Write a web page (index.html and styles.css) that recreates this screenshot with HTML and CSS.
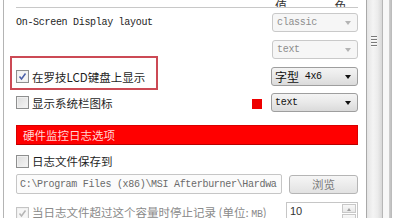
FILE: index.html
```html
<!DOCTYPE html>
<html>
<head>
<meta charset="utf-8">
<link rel="stylesheet" href="styles.css">
</head>
<body>
<div class="panel">
  <div class="top">
    <span class="hd hd1">数值</span>
    <span class="hd hd2">颜色</span>
  </div>
  <div class="row r1">
    <span class="mono">On-Screen Display layout</span>
    <div class="select disabled"><span class="mono">classic</span><i class="arrow"></i></div>
  </div>
  <div class="row r2">
    <div class="select disabled"><span class="mono">text</span><i class="arrow"></i></div>
  </div>
  <div class="row r3">
    <span class="cb checked"><svg width="9" height="9" viewBox="0 0 9 9"><path d="M1.5 4.5 L3.5 7 L7.5 1.5" fill="none" stroke="#4a5fa8" stroke-width="1.5"/></svg></span>
    <span class="label">在罗技LCD键盘上显示</span>
    <div class="select"><span class="cjk">字型</span><span class="mono">&nbsp;4x6</span><i class="arrow"></i></div>
  </div>
  <div class="row r4">
    <span class="cb"></span>
    <span class="label">显示系统栏图标</span>
    <span class="swatch"></span>
    <div class="select"><span class="mono">text</span><i class="arrow"></i></div>
  </div>
  <div class="redbar">硬件监控日志选项</div>
  <div class="row r5">
    <span class="cb"></span>
    <span class="label">日志文件保存到</span>
  </div>
  <div class="row r6">
    <div class="path"><span class="mono">C:\Program Files (x86)\MSI Afterburner\Hardwa</span></div>
    <div class="btn">浏览</div>
  </div>
  <div class="row r7">
    <span class="cb checked dis"><svg width="9" height="9" viewBox="0 0 9 9"><path d="M1.5 4.5 L3.5 7 L7.5 1.5" fill="none" stroke="#b5b5b5" stroke-width="1.5"/></svg></span>
    <span class="label gray">当日志文件超过这个容量时停止记录 (单位: <span class="mono">MB</span>)</span>
    <div class="spin"><span class="val">10</span><div class="spinbtns"><span class="sb up"></span><span class="sb down"></span></div></div>
  </div>
  <div class="highlight"></div>
</div>
<div class="scroll"><div class="grip"><i></i><i></i><i></i><i></i></div></div>
<div class="gap"></div>
<div class="edge"></div>
</body>
</html>
```
FILE: styles.css
```css
html, body {
  margin: 0;
  padding: 0;
}
body {
  width: 400px;
  height: 218px;
  overflow: hidden;
  display: flex;
  background: #fff;
  font-family: "Noto Sans CJK SC", "Liberation Sans", sans-serif;
  font-size: 11.5px;
  color: #1e1e1e;
}
.panel {
  position: relative;
  width: 342px;
  margin-left: 3px;
  border-left: 1px solid #b4b4b4;
  padding: 0 8px 0 12px;
  flex: none;
}
.mono {
  font-family: "Liberation Mono", monospace;
  font-size: 10px;
  letter-spacing: -0.3px;
}
.cjk {
  font-family: "Noto Sans CJK SC", sans-serif;
  font-size: 12px;
}
.top {
  height: 7px;
  border-bottom: 1px solid #c8c8c8;
  position: relative;
  overflow: hidden;
  display: flex;
  align-items: flex-end;
}
.hd {
  font-size: 12px;
  line-height: 12px;
  margin-bottom: -5px;
  color: #333;
}
.hd1 { margin-left: 259px; }
.hd2 { margin-left: 36px; }
.row {
  display: flex;
  align-items: center;
  height: 19px;
}
.r1 { margin-top: 5px; }
.r2 { margin-top: 8px; justify-content: flex-end; }
.r3 { margin-top: 8px; }
.r4 { margin-top: 7px; }
.r5 { margin-top: 9px; height: 14px; }
.r6 { margin-top: 6px; height: 20px; }
.r7 { margin-top: 8px; height: 20px; align-items: flex-start; }
.select {
  margin-left: auto;
  width: 82px;
  height: 17px;
  border: 1px solid #9e9e9e;
  border-radius: 3px;
  background: linear-gradient(#f4f4f4, #e9e9e9 50%, #dadada);
  display: flex;
  align-items: center;
  padding-left: 3px;
  box-sizing: content-box;
  position: relative;
  color: #111;
}
.select .mono { font-size: 10px; }
.select.disabled {
  border-color: #c9c9c9;
  background: #f6f6f6;
  color: #8d8d8d;
}
.select .arrow {
  position: absolute;
  right: 6px;
  top: 7px;
  width: 0;
  height: 0;
  border-left: 3.5px solid transparent;
  border-right: 3.5px solid transparent;
  border-top: 4px solid #111;
}
.select.disabled .arrow { border-top-color: #b4b4b4; }
.r1 .select, .r2 .select { width: 80px; padding-left: 4px; }
.cb {
  width: 11px;
  height: 11px;
  border: 1px solid #8e8f8f;
  background: linear-gradient(135deg, #dcdcdc, #f6f6f6);
  box-shadow: inset 0 0 0 1px #f0f0f0;
  display: inline-flex;
  align-items: center;
  justify-content: center;
  flex: none;
  box-sizing: content-box;
}
.cb.checked { background: #f4f4f4; }
.cb.dis { border-color: #c4c4c4; background: #f6f6f6; }
.label {
  margin-left: 3px;
  white-space: nowrap;
  line-height: 14px;
}
.label.gray { color: #8a8a8a; }
.label .mono { font-size: 10px; }
.r7 .cb { margin-top: 5px; }
.r7 .label { margin-top: 3px; }
.swatch {
  width: 10px;
  height: 10px;
  background: #ee0000;
  margin-left: auto;
  margin-right: 9px;
  margin-top: 2px;
}
.r4 .select { margin-left: 0; }
.redbar {
  margin-top: 13px;
  height: 18px;
  background: #ff0000;
  border: 1px solid #d80000;
  border-bottom-color: #b80000;
  color: #ffd6d6;
  padding-left: 6px;
  line-height: 18px;
  font-size: 11.5px;
}
.path {
  width: 261px;
  height: 18px;
  border: 1px solid #c6c6c6;
  border-radius: 2px;
  background: #fbfbfb;
  display: flex;
  align-items: center;
  padding-left: 3px;
  color: #6a6a6a;
  overflow: hidden;
  white-space: nowrap;
}
.btn {
  margin-left: auto;
  width: 67px;
  height: 17px;
  border: 1px solid #b5b5b5;
  border-radius: 3px;
  background: linear-gradient(#f6f6f6, #ececec 50%, #e2e2e2);
  color: #7a7a7a;
  text-align: center;
  line-height: 17px;
  font-size: 11.5px;
}
.spin {
  margin-left: auto;
  width: 70px;
  height: 20px;
  border: 1px solid #c6c6c6;
  border-bottom: none;
  display: flex;
  background: #fff;
}
.spin .val {
  flex: 1;
  padding-left: 3px;
  line-height: 16px;
  color: #333;
  font-family: "Liberation Sans", sans-serif;
  font-size: 11px;
}
.spinbtns {
  width: 14px;
  margin: 1px 1px 0 0;
  display: flex;
  flex-direction: column;
  gap: 1px;
}
.sb {
  height: 8px;
  border: 1px solid #c8c8c8;
  background: linear-gradient(#f8f8f8, #e8e8e8);
  position: relative;
}
.sb::after {
  content: "";
  position: absolute;
  left: 4px;
  top: 3px;
  border-left: 2.5px solid transparent;
  border-right: 2.5px solid transparent;
}
.up::after { border-bottom: 3px solid #a0a0a0; }
.down::after { border-top: 3px solid #a0a0a0; }
.highlight {
  position: absolute;
  left: 6px;
  top: 56px;
  width: 144px;
  height: 30px;
  border: 2px solid #cc4a55;
}
.scroll {
  width: 15px;
  height: 218px;
  border-left: 1px solid #a9a9a9;
  border-right: 1px solid #b6b6b6;
  background: linear-gradient(to right, #e4e4e4, #f4f4f4 40%, #ececec 70%, #d8d8d8);
  position: relative;
  flex: none;
}
.grip {
  position: absolute;
  left: 4px;
  top: 36px;
  width: 6px;
  display: flex;
  flex-direction: column;
  gap: 1px;
}
.grip i {
  display: block;
  height: 1px;
  background: #7a7a7a;
  border-bottom: 1px solid #fafafa;
}
.gap {
  width: 6px;
  flex: none;
  background: #f7f7f7;
}
.edge {
  width: 3px;
  flex: none;
  background: linear-gradient(to right, #d0d0d0, #b8b8b8);
}
```
